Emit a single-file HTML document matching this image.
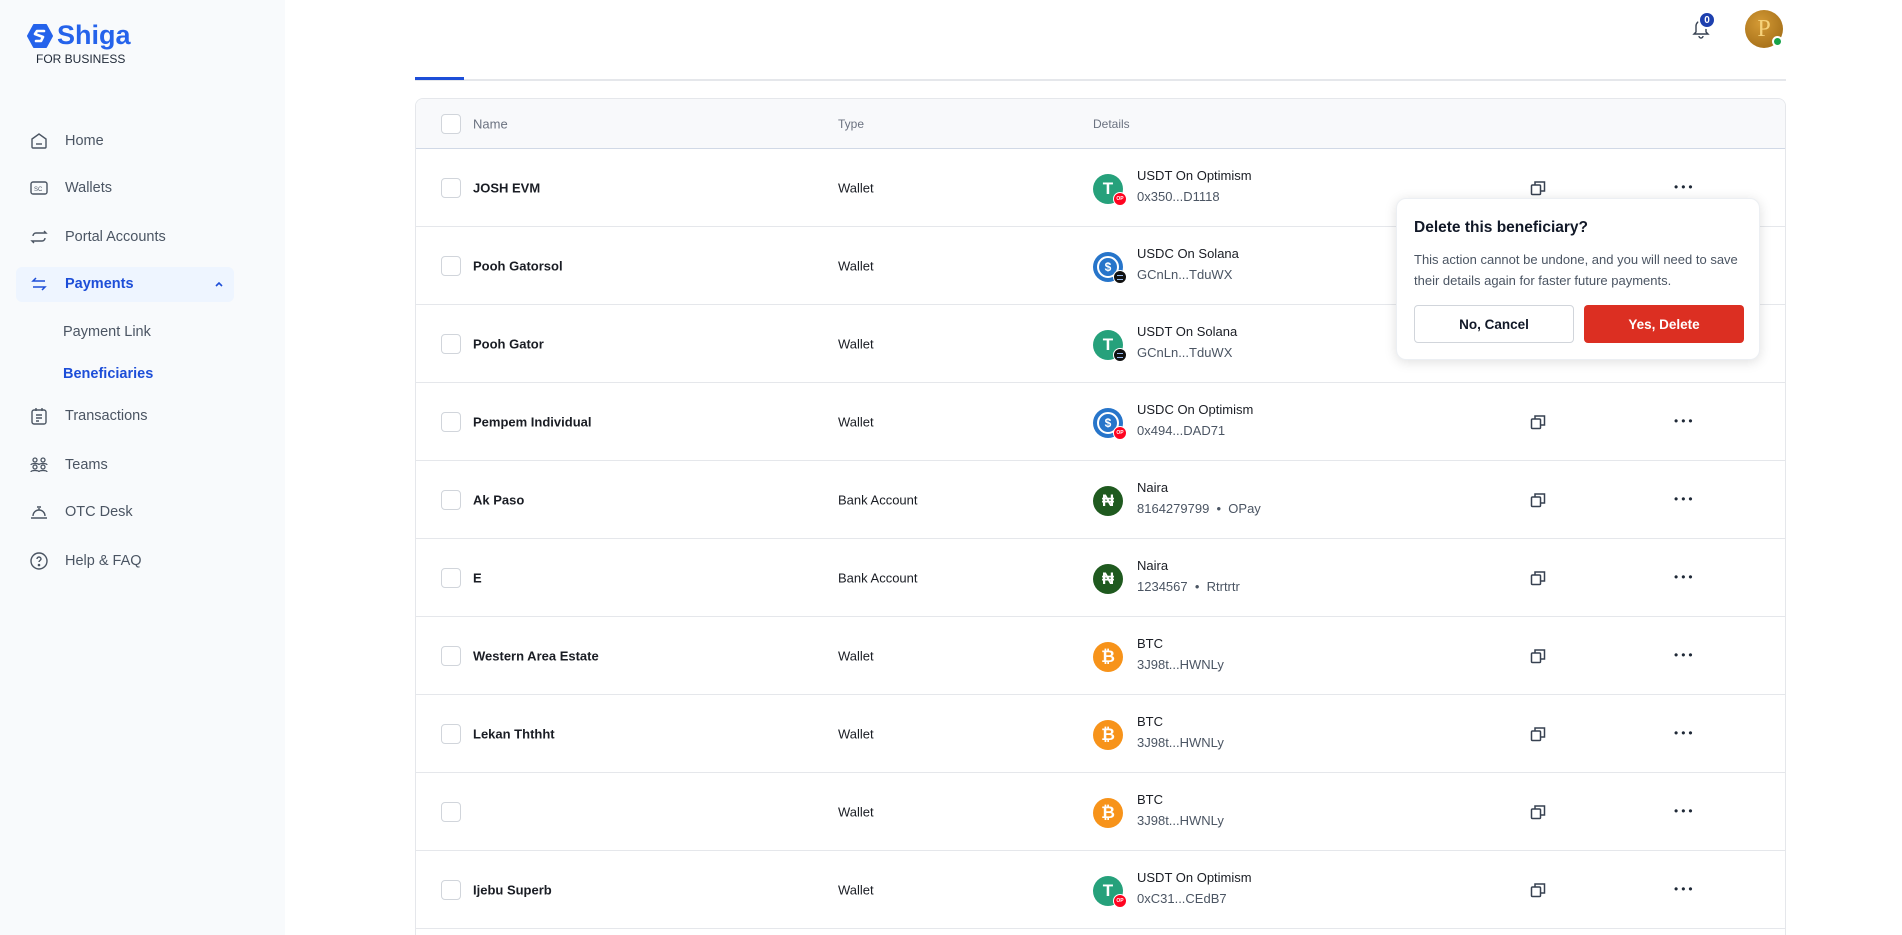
<!DOCTYPE html>
<html style="height:935px;overflow:hidden"><head><meta charset="utf-8"><style>
*{box-sizing:border-box;margin:0;padding:0}
body{width:1902px;height:935px;overflow:hidden;background:#fff;font-family:"Liberation Sans",sans-serif;color:#1a1d24;position:relative}
.side{position:absolute;left:0;top:0;width:285px;height:935px;background:#f8fafc}
.logo{position:absolute;left:27px;top:20px;display:flex;align-items:center;gap:4px;color:#2563eb;font-weight:bold;font-size:27px}
.fb{position:absolute;left:36px;top:52px;font-size:12px;color:#1f2937}
.nav{position:absolute;left:65px;font-size:14.5px;color:#4b5563;transform:translateY(-50%)}
.ic{position:absolute;left:29px;width:20px;height:20px;transform:translateY(-50%)}
.act{position:absolute;left:16px;top:267px;width:218px;height:35px;background:#eef5ff;border-radius:6px}
.table{position:absolute;left:415px;top:98px;width:1371px;height:837px;border:1px solid #e5e7eb;border-bottom:none;border-radius:8px 8px 0 0;overflow:hidden}
.th{position:absolute;left:0;top:0;width:100%;height:50px;background:#f8f9fb;border-bottom:1.5px solid #d1d9e6}
.hl{position:absolute;top:25px;transform:translateY(-50%);font-size:12px;color:#6b7280}
.cb{position:absolute;left:25px;width:20px;height:20px;border:1.5px solid #d1d5db;border-radius:4px;background:#fff;transform:translateY(-50%)}
.row{position:absolute;left:0;width:100%;height:78px;border-bottom:1px solid #e5e7eb}
.nm{position:absolute;left:57px;top:39px;transform:translateY(-50%);font-size:13px;font-weight:bold;color:#1a1d24}
.tp{position:absolute;left:422px;top:39px;transform:translateY(-50%);font-size:13px;color:#1a1d24}
.coin{position:absolute;left:677px;top:25px;width:30px;height:30px;border-radius:50%;color:#fff;font-weight:bold;font-size:17px;display:flex;align-items:center;justify-content:center}
.bd{position:absolute;right:-4px;bottom:-2px;width:14px;height:14px;border-radius:50%;border:1.5px solid #fff;font-size:5px;display:flex;align-items:center;justify-content:center}
.d1{position:absolute;left:721px;top:19px;font-size:13px;color:#1a1d24}
.d2{position:absolute;left:721px;top:40px;font-size:13px;color:#4b5563}
.cp{position:absolute;left:1114px;top:31px}
.dots{position:absolute;left:1258px;top:31px;font-size:12px;letter-spacing:3px;color:#1f2937}
.pop{position:absolute;left:1396px;top:198px;width:364px;height:162px;background:#fff;border-radius:10px;box-shadow:0 2px 12px rgba(0,0,0,.13);border:1px solid #eceff3}
</style></head><body>
<div class="side">
 <div class="logo"><svg width="26" height="24" viewBox="0 0 26 24"><path d="M7 1h12l6 11-6 11H7L1 12z" fill="#2563eb" stroke="#2563eb" stroke-width="2" stroke-linejoin="round"/><path d="M17 7h-7l-2 3 8 3-2 4H9" stroke="#fff" stroke-width="2.6" fill="none" stroke-linecap="round" stroke-linejoin="round"/></svg>Shiga</div>
 <div class="fb">FOR BUSINESS</div>
 <div class="act"></div>
 <svg class="ic" style="top:141px" viewBox="0 0 20 20" fill="none" stroke="#4b5563" stroke-width="1.4"><path d="M3 8l7-5 7 5v8a1 1 0 01-1 1H4a1 1 0 01-1-1z"/><path d="M7 13h6"/></svg>
 <div class="nav" style="top:141px">Home</div>
 <svg class="ic" style="top:188px" viewBox="0 0 20 20" fill="none" stroke="#4b5563" stroke-width="1.4"><rect x="2" y="4" width="16" height="12" rx="2"/><text x="5" y="13" font-size="6" fill="#4b5563" stroke="none" font-family="Liberation Sans">SC</text></svg>
 <div class="nav" style="top:188px">Wallets</div>
 <svg class="ic" style="top:237px" viewBox="0 0 20 20" fill="none" stroke="#4b5563" stroke-width="1.4"><path d="M4 9a3 3 0 013-3h10l-2-2M16 11a3 3 0 01-3 3H3l2 2"/></svg>
 <div class="nav" style="top:237px">Portal Accounts</div>
 <svg class="ic" style="top:284px" viewBox="0 0 20 20" fill="none" stroke="#1d4ed8" stroke-width="1.5"><path d="M16 7H4l3-3M4 13h12l-3 3"/></svg>
 <div class="nav" style="top:284px;color:#1d4ed8;font-weight:bold">Payments</div>
 <svg style="position:absolute;left:214px;top:280px" width="10" height="8" viewBox="0 0 10 8"><path d="M2 6l3-3 3 3" stroke="#1d4ed8" stroke-width="1.6" fill="none"/></svg>
 <div class="nav" style="top:332px;left:63px">Payment Link</div>
 <div class="nav" style="top:374px;left:63px;color:#1d4ed8;font-weight:bold">Beneficiaries</div>
 <svg class="ic" style="top:416px" viewBox="0 0 20 20" fill="none" stroke="#4b5563" stroke-width="1.4"><rect x="3" y="4" width="14" height="14" rx="2"/><path d="M7 2v3M13 2v3M7 9h6M7 12h6M7 15h3"/></svg>
 <div class="nav" style="top:416px">Transactions</div>
 <svg class="ic" style="top:465px" viewBox="0 0 20 20" fill="none" stroke="#4b5563" stroke-width="1.3"><circle cx="6" cy="5" r="2"/><circle cx="14" cy="5" r="2"/><circle cx="6" cy="12" r="2"/><circle cx="14" cy="12" r="2"/><path d="M2 10c0-2 8-2 8 0M10 10c0-2 8-2 8 0M2 17c0-2 8-2 8 0M10 17c0-2 8-2 8 0"/></svg>
 <div class="nav" style="top:465px">Teams</div>
 <svg class="ic" style="top:512px" viewBox="0 0 20 20" fill="none" stroke="#4b5563" stroke-width="1.4"><path d="M4 14a6 6 0 0112 0M2 16h16M10 6v2M8 5h4"/></svg>
 <div class="nav" style="top:512px">OTC Desk</div>
 <svg class="ic" style="top:561px" viewBox="0 0 20 20" fill="none" stroke="#4b5563" stroke-width="1.4"><circle cx="10" cy="10" r="8"/><path d="M8 8a2 2 0 114 0c0 1.5-2 1.5-2 3"/><circle cx="10" cy="14" r=".6" fill="#4b5563"/></svg>
 <div class="nav" style="top:561px">Help &amp; FAQ</div>
</div>

<svg style="position:absolute;left:1691px;top:17px" width="20" height="22" viewBox="0 0 20 22" fill="none" stroke="#374151" stroke-width="1.4"><path d="M5 15V9a5 5 0 0110 0v6l2 2H3z"/><path d="M8 19a2 2 0 004 0"/></svg>
<div style="position:absolute;left:1698px;top:11px;width:18px;height:18px;border-radius:50%;background:#1e40af;color:#fff;font-size:10px;font-weight:bold;display:flex;align-items:center;justify-content:center;border:2px solid #fff">0</div>
<div style="position:absolute;left:1745px;top:10px;width:38px;height:38px;border-radius:50%;background:radial-gradient(circle at 40% 35%,#d49a35,#9a6512);color:#f6d27a;font-size:24px;display:flex;align-items:center;justify-content:center;font-family:'Liberation Serif',serif">P</div>
<div style="position:absolute;left:1772px;top:36px;width:11px;height:11px;border-radius:50%;background:#16a34a;border:2px solid #fff"></div>

<div style="position:absolute;left:415px;top:79px;width:1371px;height:1.5px;background:#e5e7eb"></div>
<div style="position:absolute;left:415px;top:77px;width:49px;height:3px;background:#1d4ed8"></div>

<div class="table">
 <div class="th"><div class="cb" style="top:25px"></div><div class="hl" style="left:57px;font-size:13px">Name</div><div class="hl" style="left:422px">Type</div><div class="hl" style="left:677px">Details</div></div>
 <div id="rows"></div>
</div>

<div class="pop">
 <div style="position:absolute;left:17px;top:20px;font-size:15.5px;font-weight:bold;color:#111827">Delete this beneficiary?</div>
 <div style="position:absolute;left:17px;top:50px;width:340px;font-size:13px;line-height:21px;color:#4b5563">This action cannot be undone, and you will need to save their details again for faster future payments.</div>
 <div style="position:absolute;left:17px;top:106px;width:160px;height:38px;border:1px solid #d1d5db;border-radius:4px;display:flex;align-items:center;justify-content:center;font-size:13.5px;font-weight:bold;color:#111827">No, Cancel</div>
 <div style="position:absolute;left:187px;top:106px;width:160px;height:38px;background:#dc2f22;border-radius:4px;display:flex;align-items:center;justify-content:center;font-size:13.5px;font-weight:bold;color:#fff">Yes, Delete</div>
</div>

<script>
const rows=[
["JOSH EVM","Wallet","t","op","USDT On Optimism","0x350...D1118"],
["Pooh Gatorsol","Wallet","c","sol","USDC On Solana","GCnLn...TduWX"],
["Pooh Gator","Wallet","t","sol","USDT On Solana","GCnLn...TduWX"],
["Pempem Individual","Wallet","c","op","USDC On Optimism","0x494...DAD71"],
["Ak Paso","Bank Account","n","","Naira","8164279799 &nbsp;•&nbsp; OPay"],
["E","Bank Account","n","","Naira","1234567 &nbsp;•&nbsp; Rtrtrtr"],
["Western Area Estate","Wallet","b","","BTC","3J98t...HWNLy"],
["Lekan Ththht","Wallet","b","","BTC","3J98t...HWNLy"],
["","Wallet","b","","BTC","3J98t...HWNLy"],
["Ijebu Superb","Wallet","t","op","USDT On Optimism","0xC31...CEdB7"]];
const col={t:["#26a17b","T"],c:["#2775ca","$"],n:["#1f5a1f","₦"],b:["#f7931a","₿"]};
let h="";
rows.forEach((r,i)=>{
 const c=col[r[2]];
 let bd="";
 if(r[3]=="op")bd='<div class="bd" style="background:#ff0420;color:#fff">OP</div>';
 if(r[3]=="sol")bd='<div class="bd" style="background:#111;"><div style="width:6px;height:5px;border-top:1.5px solid #9be;border-bottom:1.5px solid #9be"></div></div>';
 const inner=r[2]=="c"?'<div style="width:22px;height:22px;border-radius:50%;border:2px solid #fff;display:flex;align-items:center;justify-content:center;font-size:12px">$</div>':c[1];
 const cp=(i==1||i==2)?'':'<svg class="cp" width="16" height="16" viewBox="0 0 16 16" fill="none" stroke="#374151" stroke-width="1.5"><rect x="1.5" y="5" width="9" height="9.5" rx="1"/><path d="M5 5V2h9.5v9H10.5"/></svg>';
 const dt=(i==1||i==2)?'':'<div class="dots">•••</div>';
 h+=`<div class="row" style="top:${50+i*78}px"><div class="cb" style="top:39px"></div><div class="nm">${r[0]}</div><div class="tp">${r[1]}</div><div class="coin" style="background:${c[0]}">${inner}${bd}</div><div class="d1">${r[4]}</div><div class="d2">${r[5]}</div>${cp}${dt}</div>`;
});
document.getElementById("rows").innerHTML=h;
</script>
</body></html>
